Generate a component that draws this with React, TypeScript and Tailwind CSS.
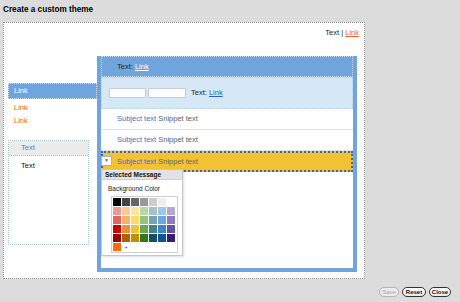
import React from "react";

const grid: string[][] = [
  ["#000000", "#444444", "#666666", "#999999", "#cccccc", "#eeeeee", "#ffffff"],
  ["#ea9999", "#f9cb9c", "#ffe599", "#b6d7a8", "#a2c4c9", "#9fc5e8", "#b4a7d6"],
  ["#e06666", "#f6b26b", "#ffd966", "#93c47d", "#76a5af", "#6fa8dc", "#8e7cc3"],
  ["#cc0000", "#e69138", "#f1c232", "#6aa84f", "#45818e", "#3d85c6", "#674ea7"],
  ["#990000", "#b45f06", "#bf9000", "#38761d", "#134f5c", "#0b5394", "#351c75"],
];

function Row({ last }: { last?: boolean }) {
  return (
    <div className={"h-[21px] flex items-center pl-[16px] text-[7.5px] " + (last ? "" : "border-b border-[#e2e2e2]")}>
      <span className="text-[#3873c4]">Subject text</span>
      <span className="text-[#5e5e5e] ml-[2px]">Snippet text</span>
    </div>
  );
}

export default function App() {
  return (
    <div className="w-[460px] h-[302px] bg-[#dcdcdc] overflow-hidden font-['Liberation_Sans',Arial,sans-serif]">
      <div className="h-[22px] pl-[3px] pt-[4px] text-[8.2px] leading-[11px] font-bold text-black">Create a custom theme</div>
      <div className="ml-[3px] w-[362px] h-[257px] border border-dotted border-[#8c8c8c] bg-white flex flex-col">
        <div className="h-[33px] flex justify-end pr-[5px] pt-[5px] text-[7.5px] leading-[9px] text-[#222]">
          <span>Text |&nbsp;</span>
          <span className="text-[#f26522] underline">Link</span>
        </div>
        <div className="flex">
          {/* left column */}
          <div className="ml-[4px] w-[89px] pt-[27px] flex flex-col">
            <div className="h-[16px] bg-[#6fa5dc] border border-dotted border-[#d0e0f0] flex items-center pl-[5px] text-[7.5px] text-white">Link</div>
            <div className="mt-[2px] pl-[6px] text-[7.5px] leading-[13px] text-[#f15a22]">Link</div>
            <div className="pl-[6px] text-[7.5px] leading-[13px] text-[#f15a22]">Link</div>
            <div className="mt-[13px] w-[81px] h-[105px] border border-dotted border-[#a9c6c6] flex flex-col">
              <div className="h-[15px] bg-[#ebebeb] border-b border-dotted border-[#a9c6c6] flex items-center pl-[12px] text-[7.5px] text-[#4a86cf]">Text</div>
              <div className="pl-[12px] pt-[5px] text-[7.5px] leading-[9px] text-[#111]">Text</div>
            </div>
          </div>
          {/* preview panel */}
          <div className="w-[260px] h-[216px] bg-[#6fa5dc] px-[4px] pb-[4px] flex flex-col">
            <div className="h-[21px] border border-dotted border-[#c9dbee] flex items-center pl-[15px] text-[7.5px]">
              <span className="text-[#222]">Text:&nbsp;</span>
              <span className="text-white underline">Link</span>
            </div>
            <div className="h-[32px] bg-[#d6e7f6] border border-dotted border-[#b9cde0] flex items-center pl-[7px] text-[7.5px]">
              <div className="w-[37px] h-[10px] bg-white border border-[#c4cdd6] rounded-[1px]" />
              <div className="ml-[2px] w-[38px] h-[10px] bg-white border border-[#c4cdd6] rounded-[1px]" />
              <span className="ml-[5px] text-[#222]">Text:&nbsp;</span>
              <span className="text-[#2f63c4] underline">Link</span>
            </div>
            <div className="flex-1 bg-white relative">
              <Row />
              <Row />
              <div className="relative h-[21px] bg-[#f2c232] border-2 border-dotted border-[#2f66c8] flex items-center pl-[14px] text-[7.5px]">
                <span className="text-[#3873c4]">Subject text</span>
                <span className="text-[#666] ml-[2px]">Snippet text</span>
                <div className="absolute left-[-2px] top-[3px] w-[11px] h-[10px] bg-white border border-[#b0b0b0] flex items-center justify-center text-[5px] text-[#666]">▼</div>
              </div>
              {/* popup */}
              <div className="absolute left-0 top-[60px] w-[82px] h-[87px] bg-white border border-[#c8c8c8] shadow-[1px_1px_2px_rgba(0,0,0,0.15)] flex flex-col">
                <div className="h-[10px] bg-[#e2e2e2] border-b border-[#cfcfcf] flex items-center pl-[3px] text-[6.5px] font-bold text-[#111]">Selected Message</div>
                <div className="pl-[6px] pt-[5px] text-[6.5px] leading-[8px] text-[#222]">Background Color</div>
                <div className="ml-[9px] mt-[3px] w-[67px] border border-[#cfcfcf] p-[1px] flex flex-col gap-[1px]">
                  {grid.map((r, i) => (
                    <div key={i} className="flex gap-[1px]">
                      {r.map((c, j) => (
                        <div key={j} className="w-[8px] h-[8px]" style={{ backgroundColor: c }} />
                      ))}
                    </div>
                  ))}
                  <div className="flex gap-[1px]">
                    <div className="w-[8px] h-[8px] bg-[#ff6d00]" />
                    <div className="w-[8px] h-[8px] flex items-center justify-center text-[6px] leading-[6px] text-[#555]">+</div>
                  </div>
                </div>
              </div>
            </div>
          </div>
        </div>
      </div>
      <div className="mt-[8px] pr-[9px] flex justify-end gap-[3px]">
        <div className="w-[20px] h-[10px] rounded-full border border-[#b5b5b5] bg-[#ececec] flex items-center justify-center text-[6px] text-[#a8a8a8]">Save</div>
        <div className="w-[24px] h-[10px] rounded-full border border-[#333] bg-gradient-to-b from-white to-[#e8e8e8] flex items-center justify-center text-[6px] font-bold text-[#111]">Reset</div>
        <div className="w-[22px] h-[10px] rounded-full border border-[#333] bg-gradient-to-b from-white to-[#e8e8e8] flex items-center justify-center text-[6px] font-bold text-[#111]">Close</div>
      </div>
    </div>
  );
}
